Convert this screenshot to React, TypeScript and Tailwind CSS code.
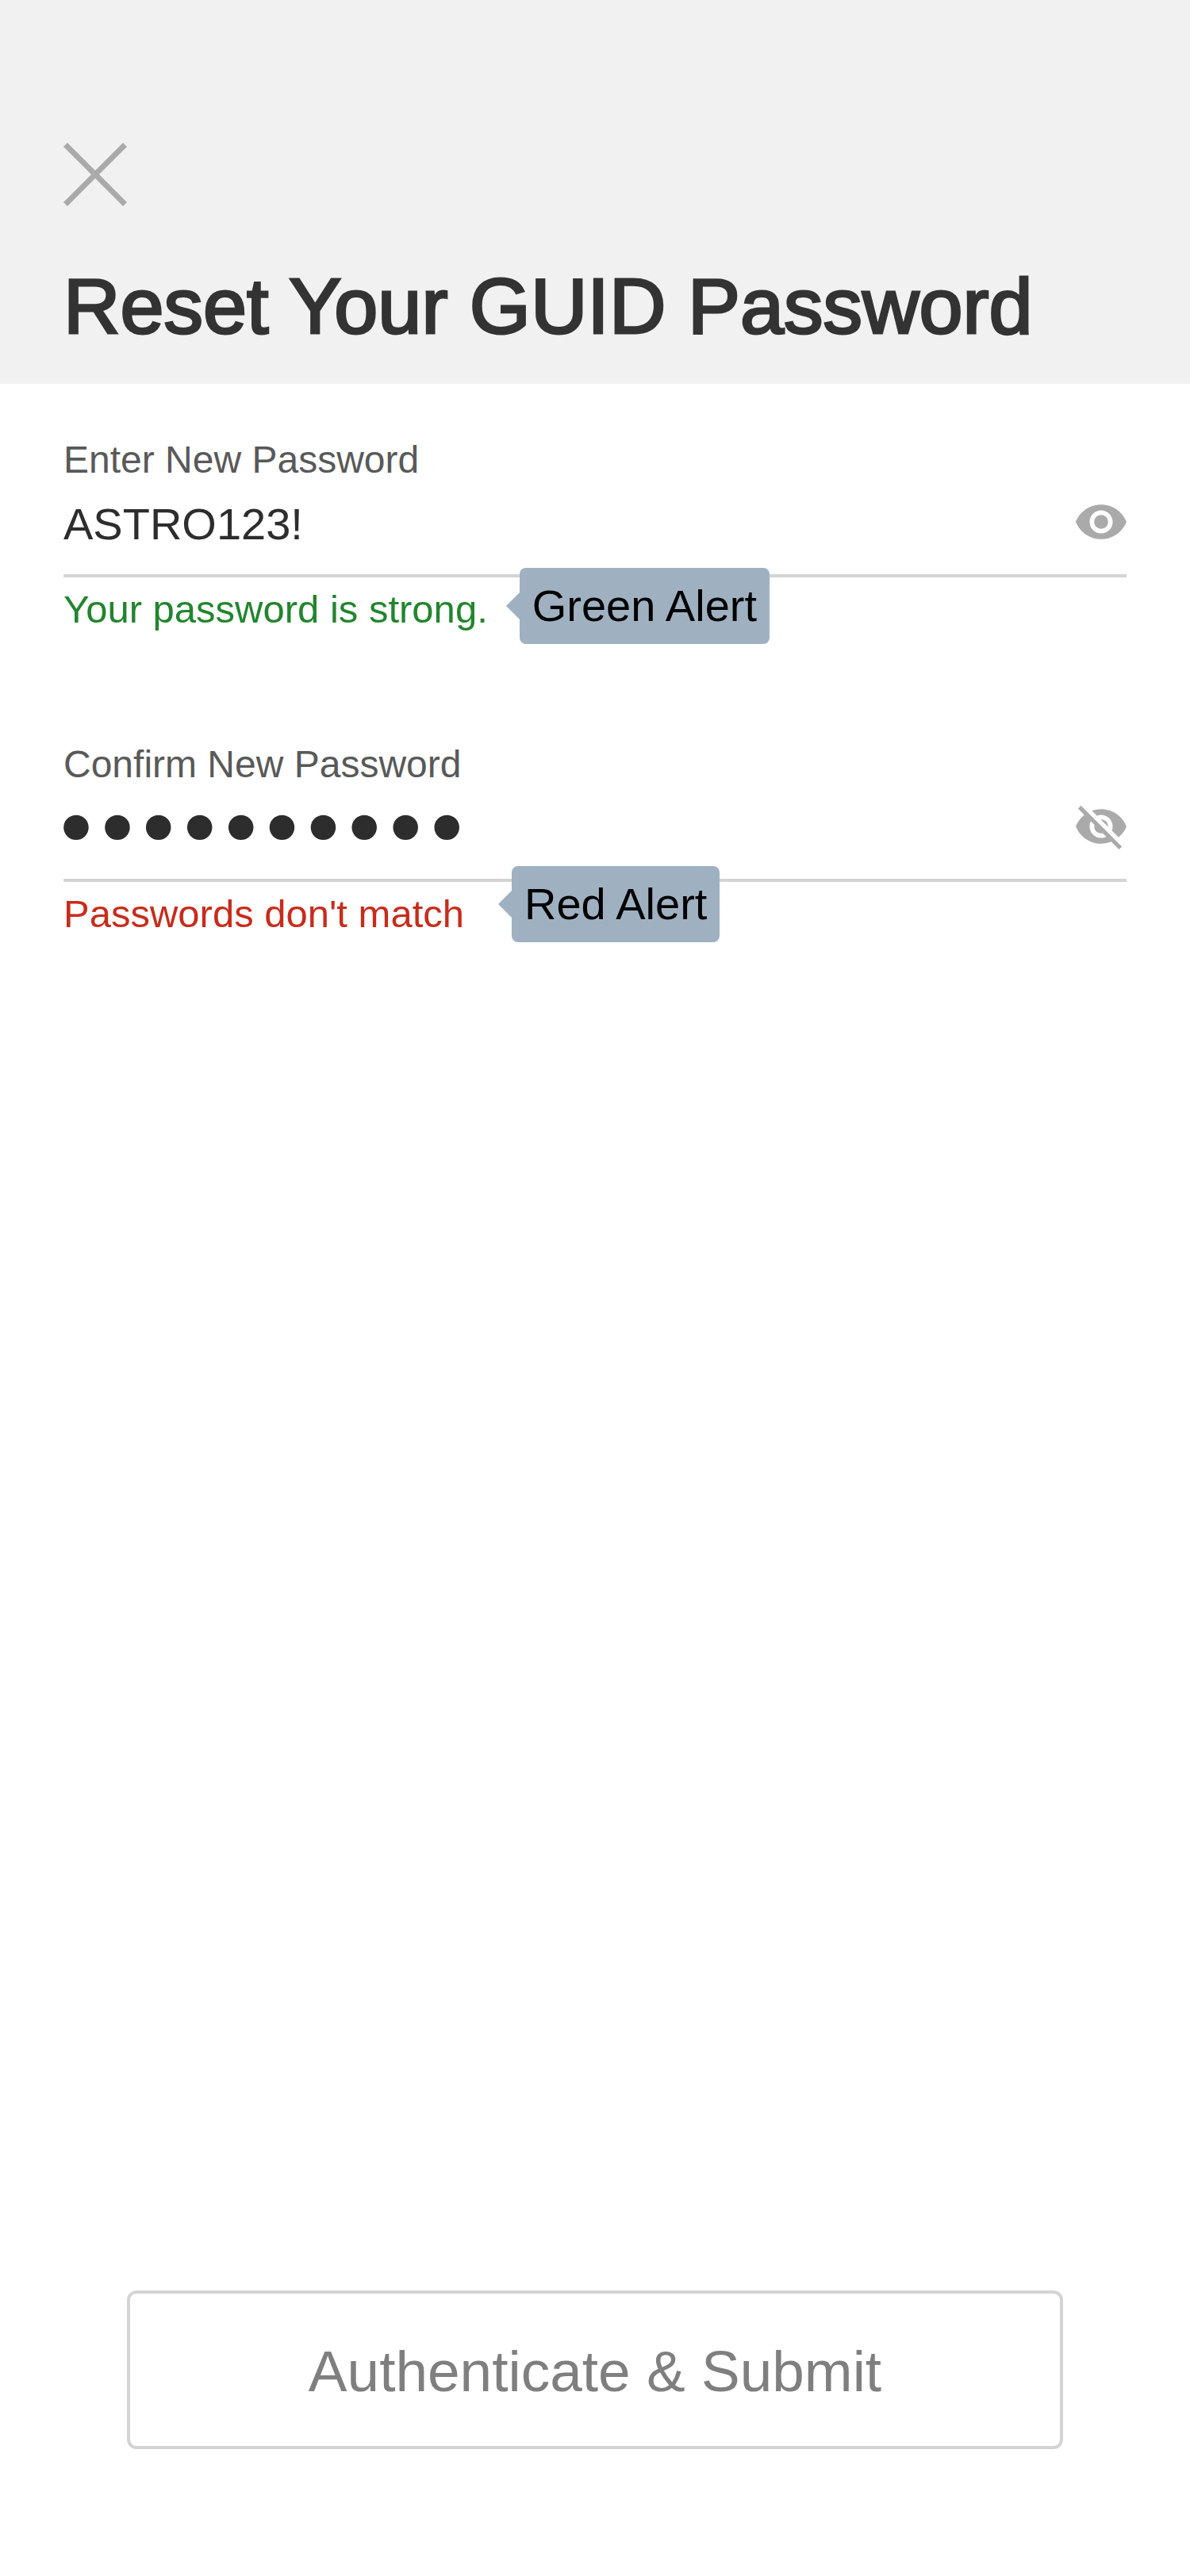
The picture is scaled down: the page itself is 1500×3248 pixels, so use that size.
import { useId, useState } from "react";

type Tone = "success" | "error";

type FieldProps = {
  label: string;
  initialValue: string;
  initiallyVisible: boolean;
  tone: Tone;
  message: string;
  callout: string;
};

const messageColor: Record<Tone, string> = {
  success: "text-[#22852e]",
  error: "text-[#c72c1c]",
};

const calloutPlace: Record<Tone, string> = {
  success: "-top-6 ml-10",
  error: "-top-8 ml-15",
};

function CloseIcon() {
  return (
    <svg viewBox="0 0 80 80" className="size-20" aria-hidden="true">
      <path d="M2.5 2.5 77.5 77.5M77.5 2.5 2.5 77.5" stroke="currentColor" strokeWidth="7" fill="none" />
    </svg>
  );
}

function EyeIcon() {
  return (
    <svg viewBox="1 1 22 22" className="size-16" fill="currentColor" aria-hidden="true">
      <path d="M12 4.5C7 4.5 2.73 7.61 1 12c1.73 4.39 6 7.5 11 7.5s9.27-3.11 11-7.5c-1.73-4.39-6-7.5-11-7.5zM12 17c-2.76 0-5-2.24-5-5s2.24-5 5-5 5 2.24 5 5-2.24 5-5 5zm0-8c-1.66 0-3 1.34-3 3s1.34 3 3 3 3-1.34 3-3-1.34-3-3-3z" />
    </svg>
  );
}

function EyeOffIcon() {
  return (
    <svg viewBox="1 1 22 22" className="size-16" fill="currentColor" aria-hidden="true">
      <path d="M12 7c2.76 0 5 2.24 5 5 0 .65-.13 1.26-.36 1.83l2.92 2.92c1.51-1.26 2.7-2.89 3.43-4.75-1.73-4.39-6-7.5-11-7.5-1.4 0-2.74.25-3.98.7l2.16 2.16C10.74 7.13 11.35 7 12 7zM2 4.27l2.28 2.28.46.46C3.08 8.3 1.78 10.02 1 12c1.73 4.39 6 7.5 11 7.5 1.55 0 3.03-.3 4.38-.84l.42.42L19.73 22 21 20.73 3.27 3 2 4.27zM7.53 9.8l1.55 1.55c-.05.21-.08.43-.08.65 0 1.66 1.34 3 3 3 .22 0 .44-.03.65-.08l1.55 1.55c-.67.33-1.41.53-2.2.53-2.76 0-5-2.24-5-5 0-.79.2-1.53.53-2.2zm4.31-.78l3.15 3.15.02-.16c0-1.66-1.34-3-3-3l-.17.01z" />
    </svg>
  );
}

function PasswordField({ label, initialValue, initiallyVisible, tone, message, callout }: FieldProps) {
  const id = useId();
  const [value, setValue] = useState(initialValue);
  const [visible, setVisible] = useState(initiallyVisible);

  return (
    <div>
      <label htmlFor={id} className="block w-fit text-[48px] leading-14 text-[#595959]">
        {label}
      </label>
      <div className="flex items-center border-b-4 border-[#d4d4d4] pb-4">
        <input
          id={id}
          type={visible ? "text" : "password"}
          value={value}
          onChange={(event) => setValue(event.target.value)}
          aria-describedby={`${id}-message`}
          className={
            visible
              ? "h-25 min-w-0 flex-1 bg-transparent pt-1 text-[56px] text-[#2d2d2d] outline-none"
              : "-ml-2.5 h-25 min-w-0 flex-1 bg-transparent pt-2 font-['DejaVu_Sans',sans-serif] text-[88px] text-[#2d2d2d] outline-none [-webkit-text-stroke:6px_#2d2d2d]"
          }
        />
        <button
          type="button"
          aria-label={visible ? "Hide password" : "Show password"}
          onClick={() => setVisible(!visible)}
          className="shrink-0 text-[#aaaaaa]"
        >
          {visible ? <EyeIcon /> : <EyeOffIcon />}
        </button>
      </div>
      <div className="relative mt-3 w-fit">
        <p id={`${id}-message`} className={`text-[49px] leading-14 ${messageColor[tone]}`}>
          {message}
        </p>
        <div
          role="note"
          className={`absolute left-full rounded-lg bg-[#9fb1c1] px-4 text-[56px] leading-24 whitespace-nowrap text-black ${calloutPlace[tone]}`}
        >
          <svg viewBox="0 0 17 34" className="absolute top-[31px] right-full h-[34px] w-[17px]" aria-hidden="true">
            <path d="M17 0v34L0 17z" fill="#9fb1c1" />
          </svg>
          {callout}
        </div>
      </div>
    </div>
  );
}

export default function App() {
  return (
    <div className="flex min-h-screen flex-col bg-white font-['Liberation_Sans',Arial,sans-serif]">
      <header className="bg-[#f1f1f1] px-20 pt-45 pb-[42px]">
        <button type="button" aria-label="Close" className="block text-[#aaaaaa]">
          <CloseIcon />
        </button>
        <h1 className="mt-[70px] text-[99px] leading-28 text-[#333333] [-webkit-text-stroke:3px_#333333]">
          Reset Your GUID Password
        </h1>
      </header>
      <form className="flex flex-1 flex-col" onSubmit={(event) => event.preventDefault()}>
        <div className="flex flex-col gap-35 px-20 pt-17">
          <PasswordField
            label="Enter New Password"
            initialValue="ASTRO123!"
            initiallyVisible
            tone="success"
            message="Your password is strong."
            callout="Green Alert"
          />
          <PasswordField
            label="Confirm New Password"
            initialValue="ASTRO1234!"
            initiallyVisible={false}
            tone="error"
            message="Passwords don't match"
            callout="Red Alert"
          />
        </div>
        <div className="mt-auto px-40 pb-40">
          <button
            type="submit"
            className="h-50 w-full rounded-xl border-4 border-[#d4d4d4] pt-1 text-[73px] text-[#7f7f7f]"
          >
            Authenticate &amp; Submit
          </button>
        </div>
      </form>
    </div>
  );
}
